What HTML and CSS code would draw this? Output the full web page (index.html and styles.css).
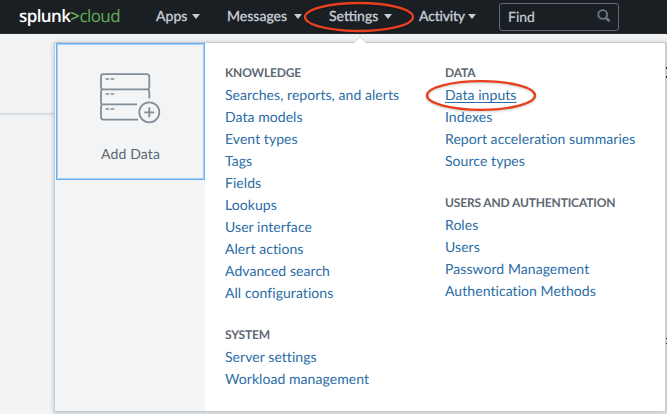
FILE: index.html
```html
<!DOCTYPE html>
<html lang="en">
<head>
<meta charset="utf-8">
<title>Splunk Cloud Settings</title>
<link rel="stylesheet" href="styles.css">
</head>
<body>
<header class="topbar">
  <div class="logo"><b>splunk</b><span class="gt">&gt;</span><span class="cloud">cloud</span></div>
  <nav class="nav">
    <a class="apps">Apps<i></i></a>
    <a class="messages">Messages<i></i></a>
    <a class="settings">Settings<i></i></a>
    <a class="activity">Activity<i></i></a>
  </nav>
  <div class="find"><span>Find</span>
    <svg width="14" height="14" viewBox="0 0 14 14" fill="none" stroke="#6b7785"><circle cx="5.7" cy="5.5" r="4.4" stroke-width="1.9"/><path d="M9 9l3.6 3.3" stroke-width="2.6"/></svg>
  </div>
</header>
<div class="page-strip"></div>
<div class="page-edge"><i class="mark one"></i><i class="mark two"></i><i class="mark three"></i><i class="mark four"></i></div>
<main class="menu">
  <svg class="caret" width="16" height="9" viewBox="0 0 16 9"><path d="M1 8.5L8 1.5l7 7" fill="#fff" stroke="#c8ced5"/></svg>
  <aside class="side">
    <div class="tile">
      <svg width="62" height="52" viewBox="0 0 62 52" fill="none" stroke="#818d99" stroke-width="1.8">
        <path d="M49.3 25.5V19q0-2.4-1.6-2.7 1.6-.4 1.6-2.5V3.6q0-2.4-2.4-2.4H3.4Q1 1.200 1 3.600v10.200q0 2.300 1.600 2.500Q1 16.800 1 19v10q0 2.300 1.600 2.500Q1 31.900 1 34v10q0 2.600 2.600 2.600H38M2.600 16.300h45.100M2.600 31.400H37"/>
        <path d="M5.500 6h3.600m1.500 0h3.600M5.500 21h3.600m1.500 0h3.600M5.500 36h3.600m1.500 0h3.600" stroke-width="1.500"/>
        <circle cx="49.300" cy="39.300" r="10"/><path d="M44.300 39.300h10m-5-5v10"/>
      </svg>
      <span>Add Data</span>
    </div>
  </aside>
  <div class="columns">
    <div class="column">
      <section>
        <h2>KNOWLEDGE</h2>
        <a>Searches, reports, and alerts</a><a>Data models</a><a>Event types</a><a>Tags</a><a>Fields</a><a>Lookups</a><a>User interface</a><a>Alert actions</a><a>Advanced search</a><a>All configurations</a>
      </section>
      <section>
        <h2>SYSTEM</h2>
        <a>Server settings</a><a>Workload management</a>
      </section>
    </div>
    <div class="column">
      <section>
        <h2>DATA</h2>
        <a class="current">Data inputs</a><a>Indexes</a><a>Report acceleration summaries</a><a>Source types</a>
      </section>
      <section>
        <h2>USERS AND AUTHENTICATION</h2>
        <a>Roles</a><a>Users</a><a>Password Management</a><a>Authentication Methods</a>
      </section>
    </div>
  </div>
</main>
<svg class="annotations" width="667" height="414" fill="none" stroke="#e8401f" stroke-width="2.300">
  <ellipse cx="359" cy="17" rx="54" ry="14"/>
  <ellipse cx="481" cy="95.500" rx="54" ry="14.300"/>
</svg>
</body>
</html>
```
FILE: styles.css
```css
* { box-sizing: border-box; }
body { margin: 0; width: 667px; height: 414px; overflow: hidden; position: relative; background: #f2f3f5; font-family: Lato, "Liberation Sans", sans-serif; font-size: 14px; text-rendering: geometricPrecision; }
.topbar { height: 34px; background: #1a1f23; display: flex; color: #c7cdd6; }
.logo { width: 156px; padding-left: 19px; font: 17px/32px "Open Sans", sans-serif; letter-spacing: -.6px; color: #fff; white-space: nowrap; }
.logo b { font-weight: 600; }
.gt, .cloud { color: #65ae58; }
.gt { font-weight: 600; }
.nav { display: flex; width: 343px; height: 32px; line-height: 32px; font-weight: 500; }
.nav a { display: flex; align-items: center; justify-content: space-between; white-space: nowrap; -webkit-text-stroke: .25px; }
.nav i { border: 4px solid transparent; border-top: 5px solid #c7cdd6; border-bottom: 0; }
.apps { width: 44px; }
.messages { width: 75px; margin-left: 27px; }
.settings { width: 63px; margin-left: 27px; }
.activity { width: 57px; margin-left: 27px; letter-spacing: -.2px; }
.find { width: 120px; height: 28px; margin-top: 3px; border: 1px solid #626a75; border-radius: 3px; padding: 0 7px 2px 8px; display: flex; align-items: center; justify-content: space-between; -webkit-text-stroke: .2px; }
.page-strip { height: 80px; border-bottom: 1px solid #d3d8de; box-shadow: 0 1px 2px #dde0e4; }
.page-edge { position: absolute; left: 665px; top: 42px; width: 2px; height: 372px; background: #dfe2e5; }
.mark { position: absolute; right: 0; width: 1px; height: 2px; background: #343a41; }
.one { top: 25px; }
.two { top: 34px; }
.three { top: 296px; height: 1px; }
.four { top: 301px; height: 1px; }
.menu { position: absolute; left: 54px; top: 42px; width: 612px; height: 370px; display: flex; background: #fff; border: 1px solid #c3cbd4; box-shadow: 0 1px 5px rgba(0,0,0,.22); }
.caret { position: absolute; left: 297px; top: -8px; }
.side { width: 150px; background: #f2f4f5; padding: 0 0 0 1px; }
.tile { width: 149px; height: 137px; border: 1px solid #6eb1f2; box-shadow: inset 0 0 0 1px #a6d0f8; display: flex; flex-direction: column; align-items: center; padding-top: 29px; color: #5c6773; }
.tile span { margin-top: 20px; line-height: 18px; letter-spacing: .15px; }
.columns { display: flex; padding: 18px 0 0 20px; }
.column { width: 220px; }
section { display: flex; flex-direction: column; align-items: flex-start; margin-bottom: 19px; }
h2 { margin: 0; height: 23px; font-size: 12px; line-height: 23px; font-weight: 700; letter-spacing: -.15px; color: #5c6773; white-space: nowrap; }
section a { height: 22px; line-height: 21px; color: #2a6ca5; letter-spacing: .06px; white-space: nowrap; }
.current { text-decoration: underline; text-underline-offset: 2px; text-decoration-thickness: 1px; text-decoration-skip-ink: none; }
.annotations { position: absolute; left: 0; top: 0; pointer-events: none; filter: drop-shadow(0 1px 1px rgba(0,0,0,.2)); }
```
